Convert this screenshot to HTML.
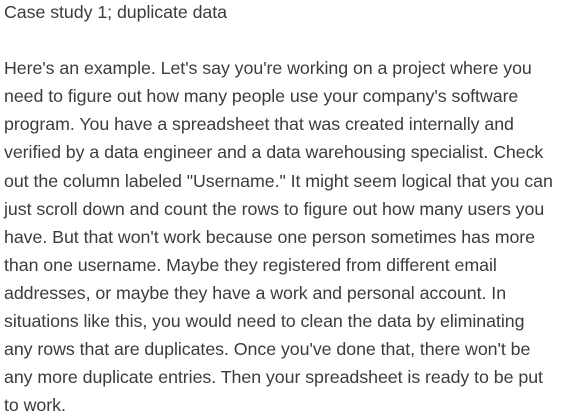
<!DOCTYPE html>
<html><head><meta charset="utf-8"><style>
html,body{margin:0;padding:0;background:#fff;width:562px;height:416px;overflow:hidden}
.t{position:absolute;left:4px;top:-2px;font-family:"Liberation Sans",Arial,sans-serif;font-size:17.8px;line-height:28.1px;color:#3c3c3c;white-space:nowrap;letter-spacing:-0.05px}
</style></head><body>
<div class="t">Case study 1; duplicate data<br><br>Here's an example. Let's say you're working on a project where you<br>need to figure out how many people use your company's software<br>program. You have a spreadsheet that was created internally and<br>verified by a data engineer and a data warehousing specialist. Check<br>out the column labeled "Username." It might seem logical that you can<br>just scroll down and count the rows to figure out how many users you<br>have. But that won't work because one person sometimes has more<br>than one username. Maybe they registered from different email<br>addresses, or maybe they have a work and personal account. In<br>situations like this, you would need to clean the data by eliminating<br>any rows that are duplicates. Once you've done that, there won't be<br>any more duplicate entries. Then your spreadsheet is ready to be put<br>to work.</div>
</body></html>
